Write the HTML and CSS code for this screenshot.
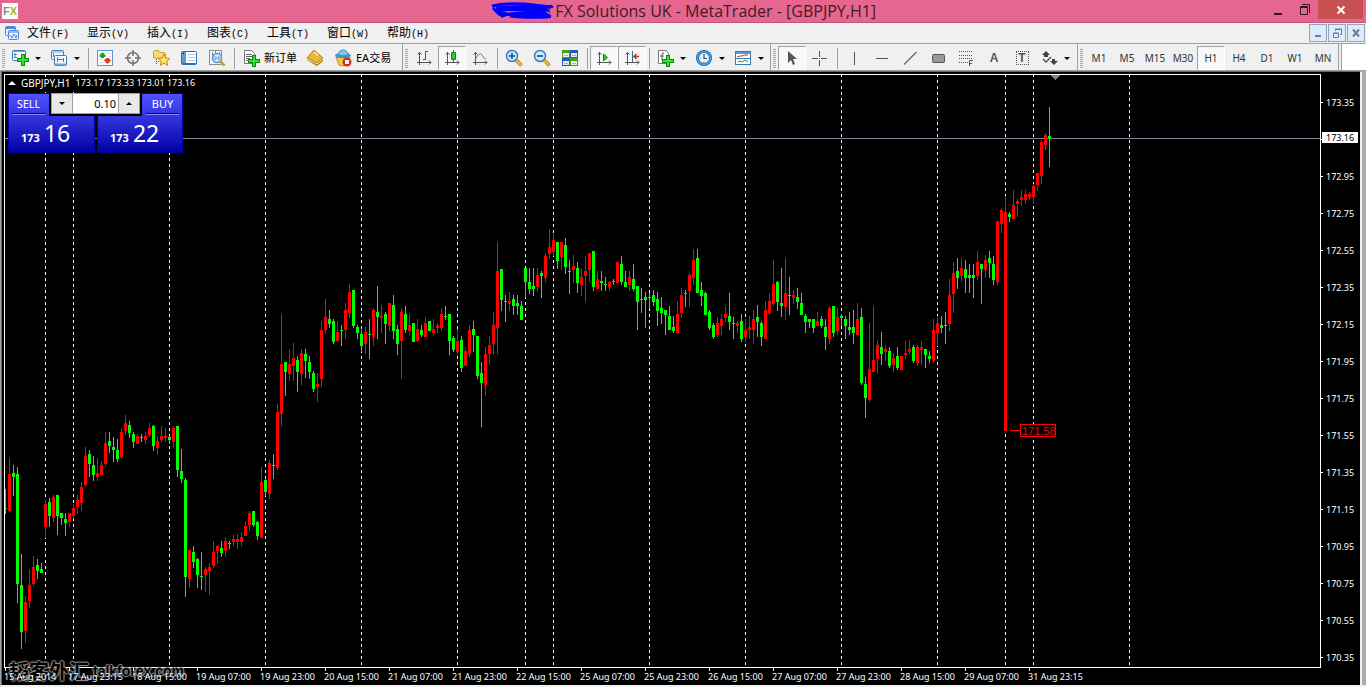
FILE: index.html
```html
<!DOCTYPE html>
<html lang="zh-CN">
<head>
<meta charset="utf-8">
<title>FX Solutions UK - MetaTrader - [GBPJPY,H1]</title>
<link rel="stylesheet" href="styles.css">
</head>
<body>
<header class="titlebar">
  <span class="app-logo"><span class="logo-f">F</span><span class="logo-x">X</span></span>
  <h1 class="title">
    <svg class="scribble" width="64" height="18" viewBox="0 0 64 18"><path d="M2 4Q20 0 44 3T60 4M3 6L10 13L8 8Q30 2 54 4L57 8L50 6L56 12L60 14M6 6Q26 4 52 7L54 11Q30 5 8 9L12 14Q30 8 54 13L58 15Q34 16 20 14L50 10M10 10Q24 15 40 14T61 15" fill="none" stroke="#00f" stroke-width="3"/></svg><span>: FX Solutions UK - MetaTrader - [GBPJPY,H1]</span>
  </h1>
  <div class="win-buttons">
    <button class="win-btn" aria-label="最小化"><svg width="12" height="14" viewBox="0 0 12 14"><path d="M2 11h8v2H2z" fill="#2a1a20"/></svg></button>
    <button class="win-btn" aria-label="还原"><svg width="12" height="14" viewBox="0 0 12 14"><path d="M1.500 4.500h7v8h-7zM1 5.500h8M3 2.500h7.500V11" fill="none" stroke="#2a1a20"/></svg></button>
    <button class="win-btn close" aria-label="关闭"><svg width="10" height="10" viewBox="0 0 10 10"><path d="M1.500 1.500l7 7m0-7l-7 7" stroke="#fff" stroke-width="2"/></svg></button>
  </div>
</header>

<nav class="menubar">
  <svg class="doc-icon" width="16" height="16" viewBox="0 0 16 16"><rect x="1.500" y="1.500" width="10" height="9" rx="1" fill="#e6f0ff" stroke="#4d86d8"/><path d="M2 3h9" stroke="#4d86d8" stroke-width="2"/><rect x="4.500" y="5.500" width="10" height="9" rx="1" fill="#e6f0ff" stroke="#4d86d8"/><path d="M5 7h9" stroke="#4d86d8"/><path d="M6 10l2 3 2-4 2 4 1-3" fill="none" stroke="#4d86d8"/></svg>
  <button class="menu">文件<span>(F)</span></button>
  <button class="menu">显示<span>(V)</span></button>
  <button class="menu">插入<span>(I)</span></button>
  <button class="menu">图表<span>(C)</span></button>
  <button class="menu">工具<span>(T)</span></button>
  <button class="menu">窗口<span>(W)</span></button>
  <button class="menu">帮助<span>(H)</span></button>
  <div class="mdi-buttons">
    <button class="mdi" aria-label="最小化图表"><svg width="12" height="12" viewBox="0 0 12 12"><path d="M3 8h6v2H3z" fill="#6c7f98"/></svg></button>
    <button class="mdi" aria-label="还原图表"><svg width="12" height="12" viewBox="0 0 12 12"><path d="M2.500 6.500h5v4h-5zM2 6h6M4.500 4V2.500h6v5H9M4 2h7" fill="none" stroke="#6c7f98"/></svg></button>
    <button class="mdi" aria-label="关闭图表"><svg width="12" height="12" viewBox="0 0 12 12"><path d="M3 2.500l6 7m0-7l-6 7" stroke="#6c7f98" stroke-width="2"/></svg></button>
  </div>
</nav>

<div class="toolbar">
  <div class="group group-main">
    <i class="grip"></i>
    <button class="tool drop" aria-label="新图表"><svg class="icon" viewBox="0 0 18 18"><rect x="1.500" y="1.500" width="13" height="10" rx="1" fill="#f4f9ff" stroke="#3b78b5"/><path d="M2 2.500h12" stroke="#6fa6dc"/><path d="M4 4v5M3 5.500h3M3 8.500h3" stroke="#5080b0" fill="none"/><path d="M10 5h4v4h4v4h-4v4h-4v-4H6V9h4z" fill="#0c8a0c"/><path d="M11 6h2v4h4v2h-4v4h-2v-4H7v-2h4z" fill="#3fdc3f"/></svg><i class="arrow"></i></button>
    <button class="tool drop" aria-label="配置文件"><svg class="icon" viewBox="0 0 18 18"><rect x="1.500" y="1.500" width="12" height="9" rx="1" fill="#f4f9ff" stroke="#3b78b5"/><path d="M2 3h11" stroke="#6fa6dc"/><rect x="4.500" y="6.500" width="12" height="10" rx="1" fill="#f4f9ff" stroke="#3b78b5"/><path d="M5 15.500h11" stroke="#6fa6dc" stroke-width="2"/><path d="M3.500 4v4M7 10.500h6M7.500 8v5M13.500 9v4" stroke="#5080b0" fill="none"/></svg><i class="arrow"></i></button>
    <i class="sep"></i>
    <button class="tool" aria-label="市场报价"><svg class="icon" viewBox="0 0 18 18"><rect x="1.500" y="1.500" width="15" height="15" fill="#fff" stroke="#5b98cf"/><path d="M3 4.500h12M3 7.500h12M3 10.500h12M3 13.500h12" stroke="#dce6f0"/><path d="M6.500 3l3.500 4-1.500 1-2-1-2 1L3 7z" fill="#14a32a"/><path d="M5 7h3v2H5z" fill="#14a32a"/><path d="M11.500 15L8 11.500l1.500-1.500 2 1 2-1 1.500 1.500z" fill="#e0401c"/><path d="M10 9h3v2h-3z" fill="#e0401c"/></svg></button>
    <button class="tool" aria-label="数据窗口"><svg class="icon" viewBox="0 0 18 18"><circle cx="9" cy="9" r="5.500" fill="none" stroke="#707070" stroke-width="1.500"/><path d="M9 1v6M9 11v6M1 9h6M11 9h6" stroke="#707070" stroke-width="1.500"/></svg></button>
    <button class="tool" aria-label="导航"><svg class="icon" viewBox="0 0 18 18"><path d="M1.500 9V2.500l1-1h4l1 2h5l1 1V9z" fill="#f3dd72" stroke="#c6a12a"/><path d="M4.500 10v5M6 12.500h2" stroke="#444" stroke-dasharray="1 1"/><path d="M12 5l1.800 4 4 .5-3 2.700 1 4.300-3.800-2.300-3.800 2.300 1-4.300-3-2.700 4-.5z" fill="#ffe264" stroke="#c79011"/></svg></button>
    <button class="tool" aria-label="终端"><svg class="icon" viewBox="0 0 18 18"><rect x="1.500" y="2.500" width="15" height="13" rx="1" fill="#fff" stroke="#2e6fae"/><path d="M2 3h4v12H2z" fill="#5b9bd8"/><path d="M3 4h1v1H3z" fill="#000"/><path d="M8 5.500h7M8 8.500h7M8 11.500h7" stroke="#a8c8ec"/><path d="M2 14.500h14" stroke="#2e6fae"/></svg></button>
    <button class="tool" aria-label="策略测试"><svg class="icon" viewBox="0 0 18 18"><rect x="1.500" y="1.500" width="12" height="14" fill="#f6f6f6" stroke="#8d8d8d"/><path d="M4.500 3v5M7.500 2v7M11.500 3v4" stroke="#6c8fb8"/><circle cx="9" cy="9" r="4.500" fill="#d6ecff" stroke="#5f96cc" stroke-width="1.500"/><path d="M7 7v4l2-3 2 3V7" fill="none" stroke="#6c9fd4"/><path d="M12.500 12.500l4 4" stroke="#d59a23" stroke-width="2.500"/></svg></button>
    <i class="sep"></i>
    <button class="tool wide order"><svg class="icon" viewBox="0 0 18 18"><path d="M2.500 1.500h7l3 3v10h-10z" fill="#fff" stroke="#777"/><path d="M4 5.500h6M4 7.500h6M4 9.500h4M4 11.500h3" stroke="#666"/><path d="M10 6h4v4h4v4h-4v4h-4v-4H6v-4h4z" fill="#0c8a0c"/><path d="M11 7h2v4h4v2h-4v4h-2v-4H7v-2h4z" fill="#3fdc3f"/></svg>新订单</button>
    <button class="tool" aria-label="MetaEditor"><svg class="icon" viewBox="0 0 18 18"><path d="M8 1l9 8v3l-6 5-10-6V9z" fill="#a86c10"/><path d="M8 1l9 8-6 5L1 9z" fill="#e9b838" stroke="#b87f18"/><path d="M8 3l4 3.500" stroke="#fbe38f" stroke-width="2"/><path d="M1 10l10 5 6-5" fill="none" stroke="#fff0b8"/></svg></button>
    <button class="tool wide ea"><svg class="icon" viewBox="0 0 18 18"><path d="M2 8l3 8q4 2 8 0l3-8z" fill="#f4c94a" stroke="#c48b1e"/><ellipse cx="9" cy="6.500" rx="8" ry="2.800" fill="#3f9ccb"/><path d="M4 6q1-5 5-5t5 5q-5 2-10 0" fill="#7cc8ec" stroke="#3a8fba"/><circle cx="13" cy="13" r="4.500" fill="#dc2a1c"/><path d="M11 11h4v4h-4z" fill="#fff"/></svg>EA交易</button>
  </div>
  <div class="group">
    <i class="grip"></i>
    <button class="tool" aria-label="柱形图"><svg class="icon" viewBox="0 0 18 18"><path d="M4.500 3v13M2 13.500h14M2.500 5.500l2-2 2 2M14 11.500l2 2-2 2" fill="none" stroke="#555"/><path d="M10.500 2v9M10 2.500h3M8 10.500h2" stroke="#128a12" fill="none"/></svg></button>
    <button class="tool pressed" aria-label="阴阳烛"><svg class="icon" viewBox="0 0 18 18"><path d="M4.500 3v13M2 13.500h14M2.500 5.500l2-2 2 2M14 11.500l2 2-2 2" fill="none" stroke="#555"/><path d="M10.500 1v12" stroke="#128a12"/><path d="M8.500 3.500h4v7h-4z" fill="#35c435" stroke="#128a12"/></svg></button>
    <button class="tool" aria-label="折线图"><svg class="icon" viewBox="0 0 18 18"><path d="M4.500 3v13M2 13.500h14M2.500 5.500l2-2 2 2M14 11.500l2 2-2 2" fill="none" stroke="#555"/><path d="M4 11Q9 2 11 6t4 4" fill="none" stroke="#3da83d"/></svg></button>
    <i class="sep"></i>
    <button class="tool" aria-label="放大"><svg class="icon" viewBox="0 0 18 18"><path d="M11 11l5.500 5.500" stroke="#b98415" stroke-width="3.500"/><path d="M11 11l5 5" stroke="#f2cf4b" stroke-width="1.500"/><circle cx="7" cy="7" r="5.500" fill="#cfeaff" stroke="#3b7dbd" stroke-width="1.500"/><path d="M4 7h6M7 4v6" stroke="#2c6ba8" stroke-width="2"/></svg></button>
    <button class="tool" aria-label="缩小"><svg class="icon" viewBox="0 0 18 18"><path d="M11 11l5.500 5.500" stroke="#b98415" stroke-width="3.500"/><path d="M11 11l5 5" stroke="#f2cf4b" stroke-width="1.500"/><circle cx="7" cy="7" r="5.500" fill="#cfeaff" stroke="#3b7dbd" stroke-width="1.500"/><path d="M4 7h6" stroke="#2c6ba8" stroke-width="2"/></svg></button>
    <button class="tool" aria-label="平铺"><svg class="icon" viewBox="0 0 18 18"><path d="M1 1h8v8H1zM9 9h8v8H9z" fill="#4a9e1c"/><path d="M9 1h8v8H9zM1 9h8v8H1z" fill="#2b55b8"/><path d="M2 4h6v4H2zM10 12h6v4h-6zM10 4h6v4h-6zM2 12h6v4H2z" fill="#e4f0e6"/><path d="M3 6.500h4M11 6.500h4M3 14.500h4M11 14.500h4" stroke="#9ab8c8"/></svg></button>
    <i class="sep"></i>
    <button class="tool pressed" aria-label="自动滚动"><svg class="icon" viewBox="0 0 18 18"><path d="M4.500 3v13M2 13.500h14M2.500 5.500l2-2 2 2M14 11.500l2 2-2 2" fill="none" stroke="#555"/><path d="M8.500 5l4 3.500-4 3.500z" fill="#35c435" stroke="#128a12"/></svg></button>
    <button class="tool pressed" aria-label="图表平移"><svg class="icon" viewBox="0 0 18 18"><path d="M4.500 3v13M2 13.500h14M2.500 5.500l2-2 2 2M14 11.500l2 2-2 2" fill="none" stroke="#555"/><path d="M9.500 2v11" stroke="#2c6ba8"/><path d="M11 7.500h5M13.500 5L11 7.500l2.500 2.500" fill="none" stroke="#b93814" stroke-width="1.500"/></svg></button>
    <i class="sep"></i>
    <button class="tool drop" aria-label="技术指标"><svg class="icon" viewBox="0 0 18 18"><path d="M2.500 1.500h8l2 3v10h-10z" fill="#fff" stroke="#777"/><path d="M8 4q-2-1-2 2v5M4 7h4" fill="none" stroke="#555"/><path d="M10 6h4v4h4v4h-4v4h-4v-4H6v-4h4z" fill="#0c8a0c"/><path d="M11 7h2v4h4v2h-4v4h-2v-4H7v-2h4z" fill="#3fdc3f"/></svg><i class="arrow"></i></button>
    <button class="tool drop" aria-label="周期"><svg class="icon" viewBox="0 0 18 18"><circle cx="9" cy="9" r="8" fill="#1a5fae"/><circle cx="9" cy="9" r="6.500" fill="none" stroke="#4ea4ea" stroke-width="1.500"/><circle cx="9" cy="9" r="5" fill="#eef6fd"/><path d="M9 5v4.500h3" fill="none" stroke="#345" stroke-width="1.200"/><path d="M5 9h1M9 13v-1" stroke="#789"/></svg><i class="arrow"></i></button>
    <button class="tool drop" aria-label="模板"><svg class="icon" viewBox="0 0 18 18"><rect x="1.500" y="2.500" width="15" height="13" fill="#fff" stroke="#3b78b5"/><path d="M2 4h14" stroke="#5a9ade" stroke-width="2"/><path d="M2 9.500h14" stroke="#3b78b5"/><path d="M3 8l3-1h2l2-1h4" stroke="#a33e1d" fill="none"/><path d="M4 13l2-1 2 1 3-2 3 2" stroke="#259325" fill="none"/></svg><i class="arrow"></i></button>
  </div>
  <div class="group group-draw">
    <i class="grip"></i>
    <button class="tool pressed" aria-label="光标"><svg class="icon" viewBox="0 0 18 18"><path d="M5 2v12l3-3 2 5 2-1-2-5h4z" fill="#555"/></svg></button>
    <button class="tool" aria-label="十字准线"><svg class="icon" viewBox="0 0 18 18"><path d="M8.500 2v6M8.500 11v6M1 9.500h6M10 9.500h6M8 9.500h1" stroke="#555"/></svg></button>
    <i class="sep"></i>
    <button class="tool" aria-label="垂直线"><svg class="icon" viewBox="0 0 18 18"><path d="M9.500 3v13" stroke="#555"/></svg></button>
    <button class="tool" aria-label="水平线"><svg class="icon" viewBox="0 0 18 18"><path d="M3 9.500h12" stroke="#555"/></svg></button>
    <button class="tool" aria-label="趋势线"><svg class="icon" viewBox="0 0 18 18"><path d="M3 15.500L15.500 3" stroke="#666" stroke-width="1.200"/></svg></button>
    <button class="tool" aria-label="矩形"><svg class="icon" viewBox="0 0 18 18"><rect x="3.500" y="5.500" width="12" height="8" rx="1" fill="#999" stroke="#555"/></svg></button>
    <button class="tool" aria-label="斐波纳契"><svg class="icon" viewBox="0 0 18 18"><path d="M2 2.500h14M2 6.500h14M2 9.500h14M2 13.500h9" stroke="#555" stroke-dasharray="1 1"/><path d="M12.500 17v-5.500H16M12 14.500h3" fill="none" stroke="#555"/></svg></button>
    <button class="tool letter">A</button>
    <button class="tool letter boxed" aria-label="文字标签"><span>T</span></button>
    <button class="tool drop" aria-label="箭头"><svg class="icon" viewBox="0 0 18 18"><path d="M6 2l4 4H8v2H4V6H2zM14 16l-4-4h2v-2h3v2h3z" fill="#444"/><path d="M3 10l3 3 5-5" fill="none" stroke="#555" stroke-width="1.500"/></svg><i class="arrow"></i></button>
  </div>
  <div class="group periods">
    <i class="grip"></i>
    <button class="tool">M1</button><button class="tool">M5</button><button class="tool">M15</button><button class="tool">M30</button><button class="tool pressed">H1</button><button class="tool">H4</button><button class="tool">D1</button><button class="tool">W1</button><button class="tool">MN</button>
  </div>
  <div class="toolbar-rest"></div>
</div>

<main class="workspace">
  <div class="chart">
    <div class="plot">
      <svg class="canvas" id="canvas" role="img" aria-label="GBPJPY H1"></svg>
      <p class="quote"><i class="up"></i><span class="symbol">GBPJPY,H1</span><span>173.17 173.33 173.01 173.16</span></p>
      <div class="trade">
        <button class="deal sell"><span class="side">SELL</span><span class="price"><b>173</b><em>16</em></span></button>
        <button class="deal buy"><span class="side">BUY</span><span class="price"><b>173</b><em>22</em></span></button>
        <div class="lots">
          <button aria-label="减少"><i class="down"></i></button>
          <input type="text" value="0.10" aria-label="手数">
          <button aria-label="增加"><i class="up"></i></button>
        </div>
      </div>
    </div>
    <ol class="prices">
      <li>173.35</li><li><mark>173.16</mark></li><li>172.95</li><li>172.75</li><li>172.55</li><li>172.35</li><li>172.15</li><li>171.95</li><li>171.75</li><li>171.55</li><li>171.35</li><li>171.15</li><li>170.95</li><li>170.75</li><li>170.55</li><li>170.35</li>
    </ol>
    <div class="watermark"><span class="mark-cn">韬客外汇</span><span class="mark-en">talkforex.com</span></div>
    <ol class="dates">
      <li>15 Aug 2014</li><li>17 Aug 23:15</li><li>18 Aug 15:00</li><li>19 Aug 07:00</li><li>19 Aug 23:00</li><li>20 Aug 15:00</li><li>21 Aug 07:00</li><li>21 Aug 23:00</li><li>22 Aug 15:00</li><li>25 Aug 07:00</li><li>25 Aug 23:00</li><li>26 Aug 15:00</li><li>27 Aug 07:00</li><li>27 Aug 23:00</li><li>28 Aug 15:00</li><li>29 Aug 07:00</li><li>31 Aug 23:15</li>
    </ol>
  </div>
</main>
<script src="chart.js"></script>
</body>
</html>
```
FILE: styles.css
```css
* { box-sizing: border-box; }
body {
  margin: 0;
  min-height: 100vh;
  display: flex;
  flex-direction: column;
  background: #f0f0f0;
  color: #000;
  font: 12px/16px "Noto Sans", "Noto Sans CJK SC", sans-serif;
  overflow: hidden;
}
button, input { font: inherit; color: inherit; margin: 0; padding: 0; border: 0; background: none; }
ol, p, h1 { margin: 0; padding: 0; list-style: none; font-weight: 400; }
svg { display: block; }
i { display: block; }

.titlebar {
  display: grid;
  grid-template-columns: 1fr auto 1fr;
  height: 23px;
  background: #e6668f;
  border-bottom: 1px solid #c2567a;
}
.app-logo {
  display: flex;
  align-items: center;
  justify-content: center;
  width: 16px;
  height: 16px;
  margin: 3px 2px;
  background: #fff;
  font: bold 11px/16px "Liberation Sans", sans-serif;
}
.logo-f { color: #8a8a8a; }
.logo-x { color: #8cc220; }
.title {
  display: flex;
  align-items: center;
  font: 16px/22px "Open Sans", sans-serif;
  color: #3c1c28;
  white-space: nowrap;
}
.scribble { margin-right: -7px; z-index: 1; }
.win-buttons { display: flex; justify-content: flex-end; padding-right: 3px; }
.win-btn { width: 27px; height: 18px; display: flex; align-items: center; justify-content: center; }
.win-btn.close { width: 45px; height: 19px; background: #c75050; }

.menubar {
  display: flex;
  align-items: center;
  height: 21px;
  padding: 0 1px 0 4px;
  border-bottom: 1px solid #a0a0a0;
}
.doc-icon { margin-right: 7px; }
.menu { width: 60px; text-align: left; font: 12px/18px "Noto Sans CJK SC", sans-serif; white-space: nowrap; }
.menu span { font: 10px/18px "Liberation Mono", monospace; }
.mdi-buttons { display: flex; gap: 1px; margin-left: auto; }
.mdi {
  width: 18px;
  height: 18px;
  display: grid;
  place-items: center;
  background: #deebfa;
  border: 1px solid #93a4bb;
}

.toolbar { display: flex; height: 26px; background: #f0f0f0; }
.group {
  display: flex;
  align-items: center;
  padding: 2px 1px 0 2px;
  border-right: 1px solid #a0a0a0;
}
.group-main { padding-right: 5px; }
.group-draw { padding-right: 2px; }
.grip {
  width: 3px;
  height: 19px;
  margin-right: 2px;
  background: repeating-linear-gradient(#a8a8a8 0 1px, #f0f0f0 1px 2px);
}
.tool {
  width: 28px;
  height: 24px;
  display: flex;
  align-items: center;
  justify-content: center;
  border: 1px solid transparent;
  white-space: nowrap;
}
.tool.drop { width: 39px; gap: 6px; padding-right: 1px; }
.tool.wide { justify-content: flex-start; gap: 4px; padding-left: 4px; font-size: 11px; }
.order { width: 64px; }
.ea { width: 68px; }
.tool.pressed {
  background: #f8f8f8;
  border-color: #a0a0a0 #fff #fff #a0a0a0;
}
.icon { width: 18px; height: 18px; flex: none; }
.arrow { border: 3px solid transparent; border-top-color: #000; border-bottom: 0; }
.sep { width: 6px; height: 21px; background: linear-gradient(#a0a0a0, #a0a0a0) center / 1px 100% no-repeat; }
.letter { color: #555; font: bold 12px/14px "Liberation Sans", sans-serif; }
.boxed span { width: 13px; height: 14px; border: 1px dotted #555; line-height: 12px; }
.periods .tool { font-size: 10px; color: #333; }
.toolbar-rest { flex: 1; margin-left: 2px; background: #fff; border-left: 1px solid #a0a0a0; }

.workspace {
  flex: 1;
  display: flex;
  background: #ababab;
  border-top: 1px solid #a0a0a0;
  border-left: 1px solid #a0a0a0;
  border-bottom: 2px solid #f0f0f0;
  padding-right: 4px;
}
.chart {
  flex: 1;
  position: relative;
  display: grid;
  grid-template-columns: minmax(0, 1fr) 39px;
  grid-template-rows: minmax(0, 1fr) 17px;
  padding: 2px 0 0 2px;
  background: #000;
  border-top: 1px solid #696969;
  border-left: 1px solid #696969;
  border-right: 2px solid #f0f0f0;
  color: #fff;
  font-size: 9px;
  line-height: 12px;
}
.plot { position: relative; border: 1px solid #fff; overflow: hidden; }
.canvas { width: 100%; height: 100%; }
.quote {
  position: absolute;
  top: 2px;
  left: 3px;
  display: flex;
  align-items: center;
  gap: 5px;
  background: #000;
  white-space: pre;
}
.symbol { font-size: 10px; }
.up { border: 4px solid transparent; border-bottom-color: currentColor; border-top: 0; }
.trade { position: absolute; top: 18px; left: 3px; display: flex; gap: 2px; }
.deal {
  width: 87px;
  height: 60px;
  display: flex;
  flex-direction: column;
  background: linear-gradient(#5050ff, #2c2cd4 50%, #0000a4);
  border: 1px solid #0000a0;
  color: #fff;
}
.sell { clip-path: polygon(0 0, 41px 0, 41px 23px, 100% 23px, 100% 100%, 0 100%); }
.buy { width: 86px; align-items: flex-end; clip-path: polygon(45px 0, 100% 0, 100% 100%, 0 100%, 0 23px, 45px 23px); }
.side {
  width: 33px;
  margin: 0 3px;
  height: 22px;
  font-size: 11px;
  line-height: 20px;
  text-align: center;
  border-bottom: 1px solid #8888ff;
  box-shadow: 0 -1px #0000a0 inset;
}
.price { display: flex; width: 100%; align-items: baseline; gap: 4px; padding-left: 12px; line-height: 36px; }
.price b { font-size: 11px; }
.price em { font-style: normal; font-size: 23px; }
.lots {
  position: absolute;
  left: 43px;
  top: 0;
  display: flex;
  width: 89px;
  height: 21px;
  border: 1px solid #a0a0a0;
  background: #fff;
  color: #000;
}
.lots button { width: 20px; display: grid; place-items: center; background: #e8e8e8; }
.lots input { flex: 1; min-width: 0; padding-right: 2px; text-align: right; font-size: 11px; border: solid #a0a0a0; border-width: 0 1px; }
.lots i { border-width: 3px; }
.lots .up { border-top: 0; }
.down { border: 3px solid transparent; border-top-color: #000; border-bottom: 0; }

.prices { padding-top: 10px; height: 0; }
.prices li { position: relative; display: flex; align-items: center; height: 37px; gap: 3px; }
.prices li::before { content: ""; width: 2px; height: 1px; background: #fff; }
.prices mark { position: absolute; left: 1px; top: 11px; width: 36px; height: 11px; padding-left: 4px; line-height: 11px; background: #fff; color: #000; }
.dates { display: flex; grid-column: 1 / -1; position: relative; }
.dates li { position: relative; width: 64px; padding-top: 3px; white-space: nowrap; }
.dates li::before { content: ""; position: absolute; left: 1px; top: 0; width: 1px; height: 3px; background: #fff; }

.watermark {
  position: absolute;
  left: 7px;
  bottom: 2px;
  display: flex;
  align-items: center;
  gap: 4px;
  color: #000;
  line-height: 24px;
  text-shadow: 1px 0 #888, -1px 0 #888, 0 1px #888, 0 -1px #888, 0 0 3px #888;
}
.mark-cn { font: bold 20px/24px "Noto Sans CJK SC", sans-serif; }
.mark-en { font: bold 14px/24px "Liberation Sans", sans-serif; }
```
FILE: chart.js
```javascript
// One candle per hour, 4px apart: colour, high, low, body top, body bottom.
const candles = `
G 489 514 508 509|R 458 512 474 511|G 465 496 473 477|G 467 603 474 584|G 554 649 585 632|R 596 643 602 631|R 569 608 585 601|R 556 586 567 584
G 559 579 565 571|G 563 573 569 573|R 500 538 504 527|G 498 527 502 516|R 495 522 497 518|G 495 535 495 516|G 513 525 513 518|G 513 536 519 523
R 513 527 513 522|R 504 519 508 516|R 495 514 500 507|R 482 511 487 503|R 447 487 456 485|G 450 477 454 464|G 456 481 465 475|R 458 481 473 477
R 461 475 465 475|R 432 466 443 464|G 432 453 441 446|G 437 462 447 450|G 439 462 450 459|R 428 459 432 457|R 415 435 423 431|G 421 438 425 433
G 432 448 434 442|R 434 444 436 444|G 434 442 437 438|R 432 444 436 440|R 423 437 428 435|G 425 451 426 446|R 436 455 441 448|R 426 442 436 440
R 428 442 436 438|G 436 444 437 440|R 426 448 428 442|G 426 477 426 470|G 449 483 471 479|G 478 597 480 577|R 550 588 550 579|G 546 568 552 562
G 558 588 559 575|G 552 590 576 577|R 567 592 569 575|R 563 595 567 571|R 541 568 552 566|R 545 564 546 551|G 541 557 548 553|R 537 557 541 551
G 541 549 543 544|R 535 546 539 542|R 534 549 539 542|R 532 546 537 542|R 521 536 526 536|R 511 531 513 525|G 511 527 511 525|G 521 540 522 536
R 467 538 482 538|G 478 496 480 492|R 460 499 463 494|G 454 479 465 466|R 404 470 412 468|R 314 426 364 414|G 362 396 362 372|R 349 381 364 374
R 343 381 358 366|G 356 392 360 372|R 349 385 353 374|G 349 378 354 361|G 356 379 362 372|G 371 392 373 389|R 373 402 384 387|R 321 387 330 379
R 299 333 317 330|G 310 328 319 324|G 319 344 321 342|R 321 342 332 341|G 325 346 330 331|R 303 339 310 330|R 284 318 292 313|G 290 328 290 326
G 325 339 327 333|G 330 352 334 346|R 327 354 332 344|G 319 359 334 335|R 308 346 310 337|G 286 339 312 317|R 305 333 316 318|G 312 344 314 324
R 303 331 303 326|G 295 339 305 331|G 325 355 329 344|R 308 379 312 341|G 306 333 314 330|R 314 335 325 331|G 323 342 323 342|R 319 342 329 341
G 325 337 330 335|R 317 337 323 337|G 321 331 321 331|R 319 335 329 333|R 323 333 325 328|R 308 331 314 328|G 306 320 316 317|G 314 355 314 341
G 336 352 338 350|R 329 355 341 352|G 336 372 340 368|R 347 366 351 366|R 325 357 330 354|G 321 352 329 335|G 336 379 336 376|G 362 427 373 383
R 347 396 354 385|R 336 365 345 354|R 312 355 325 344|R 242 354 271 328|G 269 311 269 300|G 295 322 301 302|R 292 311 301 304|G 295 315 299 306
G 295 315 303 306|G 301 320 306 320|G 268 298 268 282|G 268 294 282 289|G 268 296 286 289|R 268 291 275 287|G 271 298 273 276|R 253 282 256 278
R 229 259 247 254|R 234 256 240 252|G 242 269 242 261|R 242 270 242 257|G 238 274 245 267|G 260 294 271 272|R 255 283 266 270|G 262 293 268 283
R 269 296 277 285|R 256 302 271 276|R 253 282 253 270|G 251 291 251 287|R 271 289 279 289|G 271 291 281 283|G 277 291 284 285|R 281 291 282 287
G 279 285 281 282|R 262 283 262 283|G 256 285 264 282|G 271 287 282 287|R 271 291 277 285|G 264 291 279 289|G 286 330 286 302|G 288 313 299 300
G 292 328 297 300|G 293 309 297 298|G 290 306 295 302|G 292 326 299 311|G 297 324 308 313|G 310 335 310 315|G 306 330 316 330|G 316 333 327 331
R 301 333 314 333|R 288 318 295 313|G 290 307 293 294|R 273 307 275 291|R 249 285 260 278|G 249 293 258 293|G 282 306 290 296|G 292 315 293 315
G 310 330 312 328|G 323 339 325 337|R 317 337 323 335|R 314 335 319 326|R 306 322 314 318|G 293 330 316 322|G 317 339 323 324|R 321 333 323 326
G 314 342 321 339|R 319 342 330 337|R 316 339 327 330|R 310 344 319 330|G 305 337 317 322|G 321 346 323 337|R 301 339 310 339|R 293 315 301 313
R 260 306 284 304|G 281 311 282 302|G 268 317 303 306|R 258 320 293 307|G 277 315 295 296|R 290 304 295 298|G 288 309 297 302|G 293 315 303 315
G 314 333 316 322|G 319 328 319 322|G 319 333 319 328|R 312 326 321 326|G 316 328 319 326|G 319 350 327 337|R 306 344 308 339|G 306 337 306 333
R 308 335 317 331|G 314 326 316 318|G 316 339 319 326|G 312 335 327 330|G 310 344 327 333|R 303 335 319 335|G 308 385 317 383|G 377 418 384 398
R 323 402 369 400|R 306 372 360 372|R 340 374 345 359|G 332 365 347 354|R 345 361 349 352|G 347 368 351 366|R 353 372 358 365|G 347 370 356 368
R 356 370 356 370|R 341 359 353 355|R 340 354 349 352|G 345 363 347 361|R 345 366 347 363|R 341 365 347 350|G 349 368 349 355|G 351 363 356 359
R 319 363 330 361|R 316 346 323 333|G 316 333 325 328|G 312 344 325 326|R 279 331 295 324|R 262 313 273 294|G 258 289 271 278|R 258 282 268 276
G 260 293 269 278|G 264 293 275 278|G 264 298 275 278|R 251 280 262 276|G 264 304 264 269|R 255 278 260 270|G 251 278 258 263|G 256 285 264 280
R 221 285 221 282|R 208 233 210 224|R 196 431 212 431|G 212 222 214 217|R 190 219 205 219|R 199 217 201 204|R 190 206 197 200|R 190 204 194 200
R 192 200 194 197|R 184 204 186 197|R 173 191 173 185|R 140 184 142 176|R 133 150 135 145|G 107 167 136 139`;

const sessions = [45, 73, 169, 265, 361, 457, 525, 553, 649, 745, 841, 937, 1005, 1033, 1129];
const LEFT = 5;
const TOP = 75;
const rect = (x, y, w, h, fill) => `<rect x="${x}" y="${y}" width="${w}" height="${h}" fill="${fill}"/>`;

let drawing = '';
for (const x of sessions) {
  drawing += `<line x1="${x - LEFT + 0.5}" x2="${x - LEFT + 0.5}" y1="-1" y2="100%" stroke="#fff" stroke-dasharray="3 3"/>`;
}
drawing += '<rect x="0" y="63" width="100%" height="1" fill="#778899"/>';
candles.trim().split(/[|\n]/).forEach((row, i) => {
  const [kind, ...values] = row.split(' ');
  const [high, low, top, bottom] = values.map(v => v - TOP);
  const fill = kind === 'R' ? '#f00' : '#0f0';
  const x = i * 4;
  drawing += rect(x, high, 1, low - high, fill) + rect(x - 1, top, 3, bottom - top, fill);
});
drawing += '<path d="M1045 0h10l-5 5z" fill="#778899"/>';
drawing += rect(1005, 355, 10, 1, '#f00');
drawing += '<rect x="1015.5" y="349.5" width="35" height="12" fill="#000" stroke="#f00"/>';
drawing += '<text x="1017" y="360" fill="#f00" font-family="Liberation Sans, sans-serif" font-size="11">171.58</text>';

const canvas = document.getElementById('canvas');
canvas.setAttribute('shape-rendering', 'crispEdges');
canvas.innerHTML = drawing;
```
